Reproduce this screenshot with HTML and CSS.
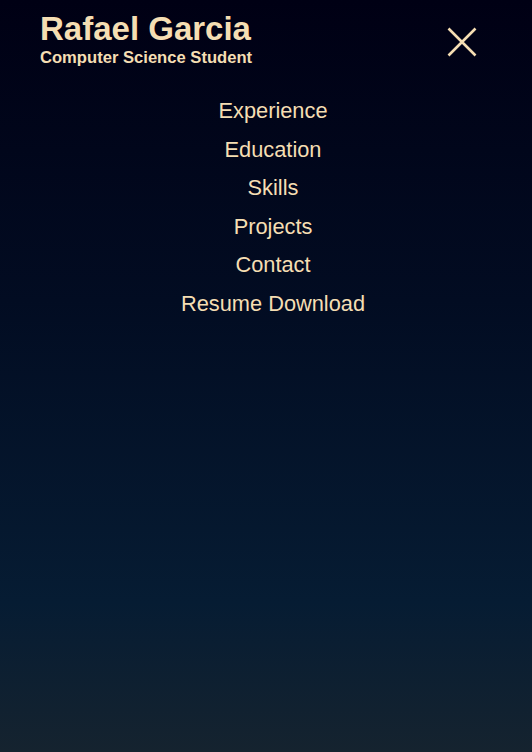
FILE: index.html
```html
<!DOCTYPE html>
<html lang="en">
<head>
<meta charset="utf-8">
<title>Rafael Garcia</title>
<link rel="stylesheet" href="styles.css">
</head>
<body>
<div class="page">
  <header class="header">
    <div class="brand">
      <h1 class="name">Rafael Garcia</h1>
      <p class="role">Computer Science Student</p>
    </div>
    <button class="close" aria-label="Close menu">
      <svg width="30" height="30" viewBox="0 0 30 30" aria-hidden="true">
        <path d="M1.5 1.5 L28.5 28.5 M28.5 1.5 L1.5 28.5" stroke="#f5deb3" stroke-width="2.6" stroke-linecap="butt" fill="none"/>
      </svg>
    </button>
  </header>
  <nav class="menu">
    <a class="menu-link" href="#experience">Experience</a>
    <a class="menu-link" href="#education">Education</a>
    <a class="menu-link" href="#skills">Skills</a>
    <a class="menu-link" href="#projects">Projects</a>
    <a class="menu-link" href="#contact">Contact</a>
    <a class="menu-link" href="#resume">Resume Download</a>
  </nav>
</div>
</body>
</html>
```
FILE: styles.css
```css
html, body {
  margin: 0;
  padding: 0;
}
body {
  min-height: 752px;
  background: linear-gradient(180deg, #000014 0%, #020c22 40%, #061c33 80%, #15232f 100%);
  font-family: "Liberation Sans", Arial, sans-serif;
  color: #f5deb3;
}
.page {
  min-height: 752px;
  display: flex;
  flex-direction: column;
}
.header {
  display: flex;
  justify-content: space-between;
  align-items: flex-start;
  padding: 12px 55px 0 40px;
}
.brand {
  display: flex;
  flex-direction: column;
  gap: 5px;
}
.name {
  margin: 0;
  font-size: 33px;
  line-height: 1;
  font-weight: 700;
}
.role {
  margin: 0;
  font-size: 16.6px;
  line-height: 1;
  font-weight: 700;
}
.close {
  margin-top: 15px;
  padding: 0;
  border: 0;
  background: none;
  width: 30px;
  height: 30px;
  display: block;
  cursor: pointer;
}
.close svg {
  display: block;
}
.menu {
  display: flex;
  flex-direction: column;
  align-items: center;
  margin: 25.7px 0 0 14px;
}
.menu-link {
  color: #f5deb3;
  text-decoration: none;
  font-size: 21.8px;
  line-height: 38.5px;
}
```
